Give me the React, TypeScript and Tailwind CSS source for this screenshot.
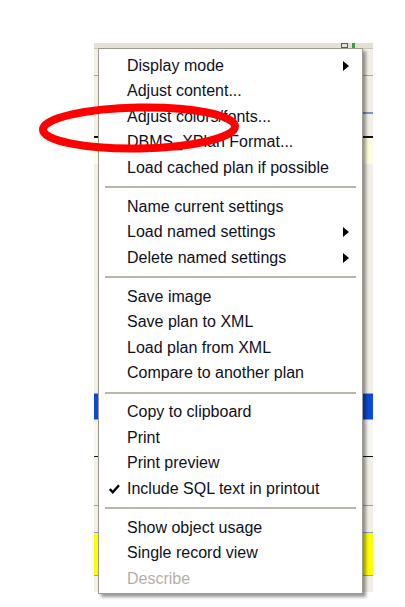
import React from "react";

type Item =
  | { type: "item"; label: string; arrow?: boolean; checked?: boolean; disabled?: boolean }
  | { type: "sep" };

const items: Item[] = [
  { type: "item", label: "Display mode", arrow: true },
  { type: "item", label: "Adjust content..." },
  { type: "item", label: "Adjust colors/fonts..." },
  { type: "item", label: "DBMS_XPlan Format..." },
  { type: "item", label: "Load cached plan if possible" },
  { type: "sep" },
  { type: "item", label: "Name current settings" },
  { type: "item", label: "Load named settings", arrow: true },
  { type: "item", label: "Delete named settings", arrow: true },
  { type: "sep" },
  { type: "item", label: "Save image" },
  { type: "item", label: "Save plan to XML" },
  { type: "item", label: "Load plan from XML" },
  { type: "item", label: "Compare to another plan" },
  { type: "sep" },
  { type: "item", label: "Copy to clipboard" },
  { type: "item", label: "Print" },
  { type: "item", label: "Print preview" },
  { type: "item", label: "Include SQL text in printout", checked: true },
  { type: "sep" },
  { type: "item", label: "Show object usage" },
  { type: "item", label: "Single record view" },
  { type: "item", label: "Describe", disabled: true },
];

function Arrow() {
  return (
    <svg width="6" height="10" viewBox="0 0 6 10" className="block">
      <path d="M0 0 L6 5 L0 10 Z" fill="#000" />
    </svg>
  );
}

function Check() {
  return (
    <svg width="11" height="10" viewBox="0 0 11 10" className="block">
      <path d="M0.8 5 L3.8 8.2 L10 1.2" fill="none" stroke="#000" strokeWidth="2.4" strokeLinejoin="miter" />
    </svg>
  );
}

export default function App() {
  return (
    <div
      className="relative w-[405px] h-[607px] bg-white overflow-hidden"
      style={{ fontFamily: '"Liberation Sans", Arial, sans-serif' }}
    >
      {/* Background application window partly visible behind the menu */}
      <div className="absolute left-[94px] top-[43px] w-[279px] h-[549px] bg-[#f1efe6] flex flex-col">
        <div className="h-[6px] bg-[#e4e1d6] border-b border-[#c9c6ba] flex items-center justify-end pr-[18px] gap-[4px]">
          <div className="w-[7px] h-[5px] border border-[#2f5fb8]" />
          <div className="w-[3px] h-[5px] bg-[#3aa13a]" />
        </div>
        <div className="h-[26px]" />
        <div className="h-[1px] bg-[#9aa9c4]" />
        <div className="h-[36px]" />
        <div className="h-[2px] bg-[#7c96c4]" />
        <div className="h-[22px]" />
        <div className="h-[1.5px] bg-[#111]" />
        <div className="h-[26px] bg-[#fffde0]" />
        <div className="h-[229px]" />
        <div className="h-[1px] bg-[#8aa3cf]" />
        <div className="h-[25px] bg-[#0b4ad8]" />
        <div className="h-[1px] bg-[#8aa3cf]" />
        <div className="h-[36px] bg-[#f7f6f1]" />
        <div className="h-[1.5px] bg-[#111]" />
        <div className="h-[48px]" />
        <div className="h-[1px] bg-[#8aa3cf]" />
        <div className="h-[26px]" />
        <div className="h-[1px] bg-[#8aa3cf]" />
        <div className="h-[42px] bg-[#ffff00]" />
        <div className="h-[1px] bg-[#8aa3cf]" />
      </div>

      {/* Context menu */}
      <div className="absolute left-[98px] top-[48px] w-[265px] bg-white border border-[#9d9a90] shadow-[3px_3px_3px_rgba(0,0,0,0.4)] pt-[4px] pb-[1px]">
        {items.map((it, i) =>
          it.type === "sep" ? (
            <div key={i} className="h-[13.5px] flex items-center px-[6px]">
              <div className="w-full h-[2px] bg-[#b9b6ab]" />
            </div>
          ) : (
            <div key={i} className="h-[25.5px] flex items-center relative">
              <div className="w-[28px] flex justify-center pl-[2px]">
                {it.checked ? <Check /> : null}
              </div>
              <span
                className={`text-[16px] leading-none whitespace-nowrap ${
                  it.disabled ? "text-[#b3b0a6]" : "text-[#10101c]"
                }`}
              >
                {it.label}
              </span>
              {it.arrow ? (
                <div className="absolute right-[13px] top-1/2 -translate-y-1/2">
                  <Arrow />
                </div>
              ) : null}
            </div>
          )
        )}
      </div>

      {/* Red annotation ellipse */}
      <svg
        className="absolute left-0 top-0 pointer-events-none"
        width="405"
        height="607"
        viewBox="0 0 405 607"
      >
        <ellipse cx="139" cy="128" rx="96" ry="20.5" fill="none" stroke="#ff0000" strokeWidth="8" transform="rotate(-1 139 128)" />
      </svg>
    </div>
  );
}
